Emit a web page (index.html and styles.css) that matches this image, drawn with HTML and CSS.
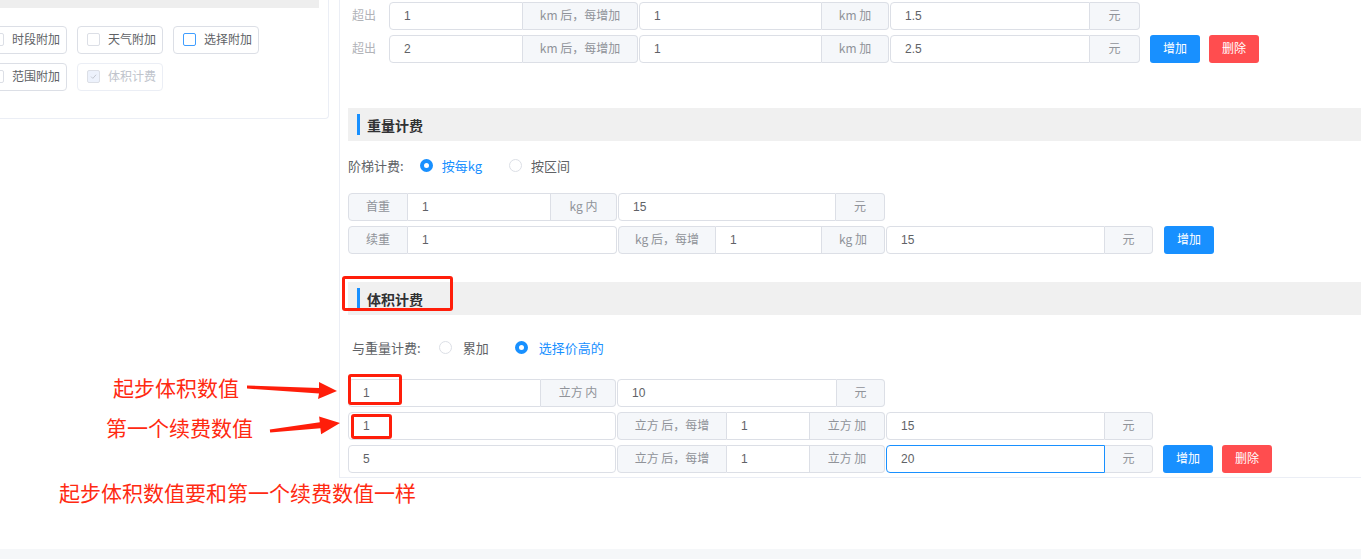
FILE: index.html
```html
<!DOCTYPE html>
<html lang="zh-CN">
<head>
  <meta charset="UTF-8">
  <title>计费设置</title>
  <link rel="stylesheet" href="styles.css">
</head>
<body>
<div class="page">
  <div class="layout">

    <!-- 左侧附加项 -->
    <div class="side">
      <div class="side-card">
        <div class="side-bar"></div>
        <div class="chk-grid">
          <label class="chk"><span class="box"></span>时段附加</label>
          <label class="chk"><span class="box"></span>天气附加</label>
          <label class="chk"><span class="box hover"></span>选择附加</label>
          <label class="chk"><span class="box"></span>范围附加</label>
          <label class="chk disabled">
            <span class="box checked"><svg viewBox="0 0 13 13"><path d="M3.6 6.6l2.1 2.1 3.9-4.3"/></svg></span>体积计费
          </label>
        </div>
      </div>
    </div>

    <!-- 右侧计费 -->
    <div class="main">
      <div class="row first">
        <span class="over">超出</span>
        <div class="grp">
          <input class="cell w134" value="1">
          <span class="cell add w115">km 后，每增加</span>
        </div>
        <div class="grp">
          <input class="cell w183" value="1">
          <span class="cell add w67">km 加</span>
        </div>
        <div class="grp">
          <input class="cell w200" value="1.5">
          <span class="cell add w50">元</span>
        </div>
      </div>
      <div class="row">
        <span class="over">超出</span>
        <div class="grp">
          <input class="cell w134" value="2">
          <span class="cell add w115">km 后，每增加</span>
        </div>
        <div class="grp">
          <input class="cell w183" value="1">
          <span class="cell add w67">km 加</span>
        </div>
        <div class="grp">
          <input class="cell w200" value="2.5">
          <span class="cell add w50">元</span>
        </div>
        <button class="btn blue">增加</button>
        <button class="btn red">删除</button>
      </div>

      <!-- 重量计费 -->
      <div class="sec">重量计费</div>
      <div class="radio-row">
        <span class="r-label">阶梯计费:</span>
        <span class="radio on"><span class="dot"></span>按每kg</span>
        <span class="radio"><span class="dot"></span>按区间</span>
      </div>
      <div class="row r-weight">
        <div class="grp">
          <span class="cell add w60">首重</span>
          <input class="cell w143" value="1">
          <span class="cell add w66">kg 内</span>
        </div>
        <div class="grp">
          <input class="cell w218" value="15">
          <span class="cell add w49">元</span>
        </div>
      </div>
      <div class="row">
        <div class="grp">
          <span class="cell add w60">续重</span>
          <input class="cell w209" value="1">
        </div>
        <div class="grp">
          <span class="cell add w98">kg 后，每增</span>
          <input class="cell w106" value="1">
          <span class="cell add w63">kg 加</span>
        </div>
        <div class="grp">
          <input class="cell w219" value="15">
          <span class="cell add w48">元</span>
        </div>
        <button class="btn blue wide-gap">增加</button>
      </div>

      <!-- 体积计费 -->
      <div class="sec sec-vol">体积计费</div>
      <div class="radio-row r-vol">
        <span class="r-label">与重量计费:</span>
        <span class="radio"><span class="dot"></span>累加</span>
        <span class="radio on"><span class="dot"></span>选择价高的</span>
      </div>
      <div class="row r-volume">
        <div class="grp">
          <input class="cell w193" value="1">
          <span class="cell add w75">立方 内</span>
        </div>
        <div class="grp">
          <input class="cell w220" value="10">
          <span class="cell add w48">元</span>
        </div>
      </div>
      <div class="row">
        <div class="grp">
          <input class="cell w268" value="1">
        </div>
        <div class="grp">
          <span class="cell add w110">立方 后，每增</span>
          <input class="cell w83" value="1">
          <span class="cell add w75">立方 加</span>
        </div>
        <div class="grp">
          <input class="cell w219" value="15">
          <span class="cell add w48">元</span>
        </div>
      </div>
      <div class="row">
        <div class="grp">
          <input class="cell w268" value="5">
        </div>
        <div class="grp">
          <span class="cell add w110">立方 后，每增</span>
          <input class="cell w83" value="1">
          <span class="cell add w75">立方 加</span>
        </div>
        <div class="grp">
          <input class="cell w219 focus" value="20">
          <span class="cell add w48">元</span>
        </div>
        <button class="btn blue">增加</button>
        <button class="btn red">删除</button>
      </div>
    </div>
  </div>
  <div class="footer"></div>

  <!-- 标注 -->
  <div class="mark mark-head"></div>
  <div class="mark mark-start"></div>
  <div class="mark mark-first"></div>
  <div class="note note-start">起步体积数值</div>
  <div class="note note-first">第一个续费数值</div>
  <div class="note note-tip">起步体积数值要和第一个续费数值一样</div>
  <svg class="arrows" viewBox="0 0 1361 559">
    <polygon points="247,385.5 319,388 319,382 337,391 318,399 319,393.5 247,388.5"/>
    <polygon points="269.8,429.5 319.8,422.3 319.1,416.4 340,423 321.1,434.2 320.4,428.3 270.2,432.5"/>
  </svg>
</div>
</body>
</html>
```

FILE: styles.css
```css
* {
  box-sizing: border-box;
}

body {
  margin: 0;
  font-family: "Liberation Sans", "Noto Sans CJK SC", sans-serif;
  font-size: 12px;
  color: #606266;
  background-color: #fff;
  overflow: hidden;
}

.page {
  position: relative;
  width: 1361px;
  height: 559px;
}

.layout {
  display: flex;
  align-items: flex-start;
  height: 549px;
}

.footer {
  height: 10px;
  background-color: #f5f7f9;
}

/* left side */
.side {
  width: 339px;
  flex-shrink: 0;
}

.side-card {
  margin-left: -30px;
  width: 359px;
  border: 1px solid #ebeef5;
  border-top: 0;
  border-radius: 0 0 4px 4px;
  padding: 0 9px 27px 10px;
}

.side-bar {
  height: 8px;
  background-color: #eee;
}

.chk-grid {
  display: grid;
  grid-template-columns: repeat(3, 86px);
  gap: 9px 10px;
  margin-top: 18px;
}

.chk {
  display: flex;
  align-items: center;
  height: 28px;
  padding: 0 0 2px 9px;
  border: 1px solid #dcdfe6;
  border-radius: 4px;
  font-family: "Noto Sans CJK SC", sans-serif;
  line-height: 1;
  color: #606266;
}

.box {
  width: 13px;
  height: 13px;
  margin-right: 8px;
  border: 1px solid #dcdfe6;
  border-radius: 2px;
  background-color: #fff;
}

.box.hover {
  border-color: #409eff;
}

.chk.disabled {
  border-color: #ebeef5;
  color: #c0c4cc;
}

.box.checked {
  background-color: #edf2fc;
}

.box svg {
  display: block;
  width: 11px;
  height: 11px;
}

.box svg path {
  fill: none;
  stroke: #c0c4cc;
  stroke-width: 1.1;
}

/* main */
.main {
  flex: 1;
  border-left: 1px solid #ebeef5;
  border-bottom: 1px solid #ebeef5;
  padding: 2px 0 4px 8px;
}

.row {
  display: flex;
  align-items: center;
  height: 28px;
  margin-top: 5px;
}

.row.first {
  margin-top: 0;
}

.over {
  width: 41px;
  padding: 0 0 2px 4px;
  font-family: "Noto Sans CJK SC", sans-serif;
  line-height: 1;
  color: #b1b3b8;
}

.grp {
  display: flex;
  height: 28px;
}

.grp + .grp {
  margin-left: 1px;
}

.cell {
  height: 28px;
  margin: 0;
  padding: 0 14px 1px;
  border: 1px solid #dcdfe6;
  border-left-width: 0;
  background-color: #fff;
  font-family: "Liberation Sans", "Noto Sans CJK SC", sans-serif;
  font-size: 12px;
  color: #606266;
  outline: none;
}

.cell:first-child {
  border-left-width: 1px;
  border-radius: 4px 0 0 4px;
}

.cell:last-child {
  border-radius: 0 4px 4px 0;
}

.cell:only-child {
  border-radius: 4px;
}

.cell.focus {
  border-color: #1890ff;
}

.add {
  display: flex;
  align-items: center;
  justify-content: center;
  padding: 0 0 2px;
  white-space: nowrap;
  font-family: "Noto Sans CJK SC", sans-serif;
  line-height: 1;
  background-color: #f5f7fa;
  color: #909399;
}

.w48 { width: 48px; }
.w49 { width: 49px; }
.w50 { width: 50px; }
.w60 { width: 60px; }
.w63 { width: 63px; }
.w66 { width: 66px; }
.w67 { width: 67px; }
.w75 { width: 75px; }
.w83 { width: 83px; }
.w98 { width: 98px; }
.w106 { width: 106px; }
.w110 { width: 110px; }
.w115 { width: 115px; }
.w134 { width: 134px; }
.w143 { width: 143px; }
.w183 { width: 183px; }
.w193 { width: 193px; }
.w200 { width: 200px; }
.w209 { width: 209px; }
.w218 { width: 218px; }
.w219 { width: 219px; }
.w220 { width: 220px; }
.w268 { width: 268px; }

.btn {
  width: 50px;
  height: 28px;
  margin-left: 10px;
  padding: 0 0 2px;
  border: none;
  border-radius: 3px;
  font-family: "Noto Sans CJK SC", sans-serif;
  font-size: 12px;
  line-height: 1;
  color: #fff;
  cursor: pointer;
}

.btn + .btn {
  margin-left: 9px;
}

.btn.wide-gap {
  margin-left: 11px;
}

.btn.blue {
  background-color: #1890ff;
}

.btn.red {
  background-color: #ff4d4f;
}

/* section title */
.sec {
  display: flex;
  align-items: center;
  height: 33px;
  margin-top: 45px;
  padding-left: 9px;
  background-color: #f0f0f0;
  font-family: "Noto Sans CJK SC", sans-serif;
  font-size: 14px;
  font-weight: bold;
  color: #303133;
}

.sec::before {
  content: "";
  width: 3px;
  height: 21px;
  margin-right: 7px;
  background-color: #1890ff;
}

.sec-vol {
  margin-top: 28px;
}

.radio-row {
  display: flex;
  align-items: center;
  height: 20px;
  margin-top: 14px;
  font-family: "Noto Sans CJK SC", sans-serif;
  font-size: 13px;
  color: #606266;
}

.r-label {
  margin-right: 16px;
}

.r-vol {
  margin-top: 22px;
  padding-left: 4px;
}

.r-vol .r-label {
  margin-right: 18px;
}

.radio {
  display: flex;
  align-items: center;
  margin-right: 27px;
}

.r-vol .radio {
  margin-right: 26px;
}

.dot {
  width: 13px;
  height: 13px;
  margin-right: 9px;
  border: 1px solid #dcdfe6;
  border-radius: 50%;
  background-color: #fff;
}

.r-vol .dot {
  margin-right: 11px;
}

.radio.on {
  color: #1890ff;
}

.radio.on .dot {
  border: 4px solid #1890ff;
}

.r-weight {
  margin-top: 18px;
}

.r-volume {
  margin-top: 22px;
}

/* annotations */
.mark {
  position: absolute;
  border: 3px solid #ff1e0a;
  border-radius: 3px;
}

.mark-head {
  left: 342px;
  top: 276px;
  width: 111px;
  height: 35px;
}

.mark-start {
  left: 348px;
  top: 374px;
  width: 54px;
  height: 31px;
}

.mark-first {
  left: 351px;
  top: 414px;
  width: 41px;
  height: 25px;
}

.note {
  position: absolute;
  font-family: "Noto Sans CJK SC", sans-serif;
  font-size: 21px;
  line-height: 24px;
  color: #ff2a12;
  white-space: nowrap;
}

.note-start {
  left: 113px;
  top: 375px;
}

.note-first {
  left: 106px;
  top: 415px;
}

.note-tip {
  left: 59px;
  top: 480px;
}

.arrows {
  position: absolute;
  left: 0;
  top: 0;
  width: 1361px;
  height: 559px;
  pointer-events: none;
}

.arrows polygon {
  fill: #ff1e0a;
}
```
